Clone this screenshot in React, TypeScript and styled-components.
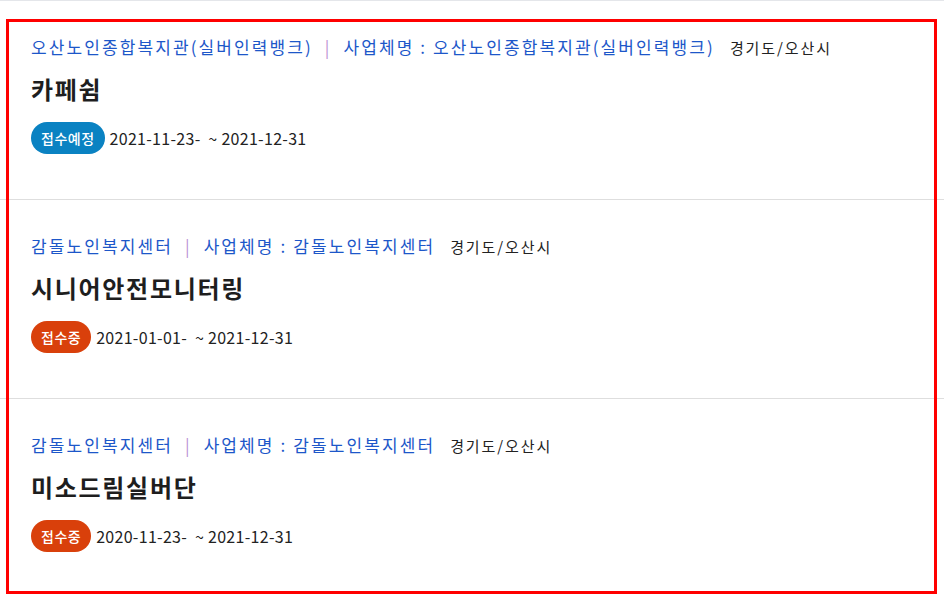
import * as React from "react"
import styled, { createGlobalStyle } from "styled-components"

const GlobalStyle = createGlobalStyle`
  html, body {
    margin: 0;
    padding: 0;
    background: #fff;
  }
  body {
    font-family: "Noto Sans CJK KR", "Noto Sans", sans-serif;
    color: #222;
  }
`

const Page = styled.div`
  position: relative;
  width: 944px;
  height: 597px;
  overflow: hidden;
`

const List = styled.ul`
  list-style: none;
  margin: 0;
  padding: 0;
  border-top: 1px solid #e4e6ea;
`

const Item = styled.li`
  height: 199px;
  box-sizing: border-box;
  padding: 28px 30px 0 31px;
  border-bottom: 1px solid #dedede;
  display: flex;
  flex-direction: column;
`

const Meta = styled.div`
  display: flex;
  align-items: baseline;
  font-size: 17px;
  letter-spacing: 2.1px;
  line-height: 36px;
  color: #1d57c9;
  white-space: nowrap;
`

const Sep = styled.span`
  color: #bb8fd3;
  margin: 0 12px 0 12px;
`

const Region = styled.span`
  color: #222;
  font-size: 15px;
  letter-spacing: 1.9px;
  margin-left: 15px;
`

const Title = styled.h3`
  margin: 5px 0 0;
  font-size: 24px;
  font-weight: 700;
  letter-spacing: 1.7px;
  line-height: 36px;
  color: #1e1e1e;
`

const Period = styled.div`
  display: flex;
  align-items: center;
  gap: 5px;
  margin-top: 15px;
`

const Badge = styled.span<{ $tone: "soon" | "open" }>`
  display: inline-flex;
  align-items: center;
  justify-content: center;
  height: 32px;
  padding: 0 10px;
  border-radius: 16px;
  background: ${(p) => (p.$tone === "soon" ? "#0a82c2" : "#d9400b")};
  color: #fff;
  font-size: 14px;
  letter-spacing: 0.5px;
  font-weight: 500;
`

const Dates = styled.span`
  font-size: 16px;
  letter-spacing: 0.3px;
  color: #222;
`

const Highlight = styled.div`
  position: absolute;
  left: 6px;
  top: 19px;
  width: 931px;
  height: 575px;
  box-sizing: border-box;
  border: 3px solid #ff0000;
  pointer-events: none;
`

interface IJob {
  org: string
  biz: string
  region: string
  title: string
  status: "soon" | "open"
  from: string
  to: string
}

const jobs: IJob[] = [
  {
    org: "오산노인종합복지관(실버인력뱅크)",
    biz: "오산노인종합복지관(실버인력뱅크)",
    region: "경기도/오산시",
    title: "카페쉼",
    status: "soon",
    from: "2021-11-23-",
    to: "2021-12-31",
  },
  {
    org: "감돌노인복지센터",
    biz: "감돌노인복지센터",
    region: "경기도/오산시",
    title: "시니어안전모니터링",
    status: "open",
    from: "2021-01-01-",
    to: "2021-12-31",
  },
  {
    org: "감돌노인복지센터",
    biz: "감돌노인복지센터",
    region: "경기도/오산시",
    title: "미소드림실버단",
    status: "open",
    from: "2020-11-23-",
    to: "2021-12-31",
  },
]

export default function App() {
  return (
    <Page>
      <GlobalStyle />
      <List>
        {jobs.map((job, i) => (
          <Item key={i}>
            <Meta>
              <span>{job.org}</span>
              <Sep>|</Sep>
              <span>사업체명 : {job.biz}</span>
              <Region>{job.region}</Region>
            </Meta>
            <Title>{job.title}</Title>
            <Period>
              <Badge $tone={job.status}>{job.status === "soon" ? "접수예정" : "접수중"}</Badge>
              <Dates>{job.from}&nbsp; ~ {job.to}</Dates>
            </Period>
          </Item>
        ))}
      </List>
      <Highlight />
    </Page>
  )
}
